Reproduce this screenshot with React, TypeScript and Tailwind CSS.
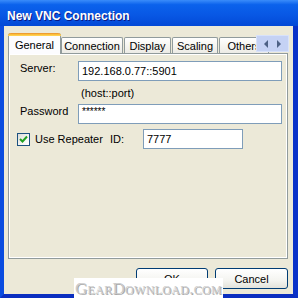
import React from "react";

function Tab({ label, w, sel }: { label: string; w: string; sel?: boolean }) {
  if (sel) {
    return (
      <div
        className={`${w} h-[21px] mb-[-1px] relative z-20 bg-[#FCFCFE] border-x border-[#919B9C] rounded-t-[3px] flex flex-col`}
      >
        <div className="h-[3px] rounded-t-[3px] bg-[linear-gradient(180deg,#E68B2C_0%,#FFC83C_60%,#FFD560_100%)] mx-[-1px]" />
        <div className="flex-1 flex items-center justify-center leading-[14px] pb-[1px]">{label}</div>
      </div>
    );
  }
  return (
    <div
      className={`${w} h-[16px] bg-[linear-gradient(180deg,#FFFFFF_0%,#F6F5F0_50%,#ECEBE6_100%)] border-x border-t border-[#919B9C] rounded-t-[2px] flex items-center justify-center leading-[14px] overflow-hidden whitespace-nowrap`}
    >
      {label}
    </div>
  );
}

export default function App() {
  return (
    <div className="w-[298px] h-[298px] relative overflow-hidden flex flex-col font-['Liberation_Sans',Arial,sans-serif] text-[11px] text-black">
      {/* Title bar */}
      <div className="h-[26px] shrink-0 bg-[linear-gradient(180deg,#3A8CFA_0%,#0B62EC_18%,#0857E4_60%,#0349D6_100%)] pl-[7px] pt-[8px]">
        <div className="text-white font-bold text-[12px] leading-[16px] [text-shadow:1px_1px_0_#0A1883]">
          New VNC Connection
        </div>
      </div>

      {/* Window body */}
      <div className="flex-1 flex flex-col bg-[#ECE9D8] border-l-4 border-r-[5px] border-b-4 border-l-[#0A4CE0] border-r-[#0A32C8] border-b-[#0A2EC0] pl-[4px] pr-[5px] pt-[7px]">
        {/* Tabs row */}
        <div className="h-[20px] flex items-end relative z-10">
          <Tab label="General" w="w-[53px]" sel />
          <Tab label="Connection" w="w-[62px]" />
          <div className="w-[1px]" />
          <Tab label="Display" w="w-[47px]" />
          <div className="w-[1px]" />
          <Tab label="Scaling" w="w-[46px]" />
          <div className="w-[1px]" />
          <Tab label="Others" w="w-[50px]" />
          {/* scroll arrows */}
          <div className="absolute left-[248px] top-[2px] w-[33px] h-[17px] bg-[#C5D2F4] border border-[#D8E2FA] flex items-center justify-around px-[3px] z-30">
            <svg width="6" height="8" viewBox="0 0 6 8">
              <path d="M5 0 L1 4 L5 8 Z" fill="#4D6185" />
            </svg>
            <svg width="6" height="8" viewBox="0 0 6 8">
              <path d="M1 0 L5 4 L1 8 Z" fill="#4D6185" />
            </svg>
          </div>
        </div>

        {/* Panel */}
        <div className="h-[206px] shrink-0 border border-[#919B9C] shadow-[inset_-1px_-1px_0_#FFFFFF,inset_1px_1px_0_#FFFFFF] bg-[#ECE9D8] flex flex-col">
          {/* Server */}
          <div className="mt-[7px] h-[20px] flex">
            <div className="w-[69px] pl-[11px] leading-[14px]">Server:</div>
            <div className="w-[204px] h-[20px] bg-white border border-[#7F9DB9] pl-[3px] flex items-center leading-[14px]">
              192.168.0.77::5901
            </div>
          </div>
          {/* host::port */}
          <div className="mt-[6px] pl-[72px] leading-[13px] h-[13px]">(host::port)</div>
          {/* Password */}
          <div className="mt-[4px] h-[20px] flex">
            <div className="w-[69px] pl-[11px] leading-[14px]">Password</div>
            <div className="w-[204px] h-[20px] bg-white border border-[#7F9DB9] pl-[3px] pt-[1px] text-[10px] leading-[12px]">
              ******
            </div>
          </div>
          {/* Repeater */}
          <div className="mt-[5px] h-[20px] flex items-center">
            <div className="ml-[8px] w-[13px] h-[13px] border border-[#1C5180] bg-[linear-gradient(135deg,#DCDCD7_0%,#F6F6F4_60%,#FFFFFF_100%)] flex items-center justify-center">
              <svg width="9" height="9" viewBox="0 0 9 9">
                <path d="M1 4 L3.5 6.5 L8 1.5" stroke="#21A121" strokeWidth="2" fill="none" />
              </svg>
            </div>
            <div className="ml-[5px] w-[75px] leading-[14px] whitespace-nowrap">Use Repeater</div>
            <div className="w-[33px] leading-[14px]">ID:</div>
            <div className="w-[100px] h-[20px] bg-white border border-[#7F9DB9] pl-[3px] flex items-center leading-[14px]">
              7777
            </div>
          </div>
        </div>

        {/* Buttons */}
        <div className="mt-[9px] h-[21px] flex justify-end gap-[7px]">
          <div className="w-[72px] h-[21px] border border-[#003C74] rounded-[3px] bg-[linear-gradient(180deg,#FFFFFF_0%,#F4F4F0_60%,#E3E2DA_100%)] flex items-center justify-center leading-[14px]">
            OK
          </div>
          <div className="w-[73px] h-[21px] border border-[#003C74] rounded-[3px] bg-[linear-gradient(180deg,#FFFFFF_0%,#F4F4F0_60%,#E3E2DA_100%)] flex items-center justify-center leading-[14px]">
            Cancel
          </div>
        </div>
      </div>

      {/* Watermark overlay */}
      <div className="absolute left-[74px] top-[278px] w-[149px] h-[20px] bg-white flex items-end justify-center pb-[1px]">
        <span className="font-['Liberation_Serif',serif] [font-variant:small-caps] text-[17px] leading-[17px] text-[#CACACA] tracking-[0.3px] [text-shadow:1px_1px_0_#A8A8A8]">
          GearDownload.com
        </span>
      </div>
    </div>
  );
}
